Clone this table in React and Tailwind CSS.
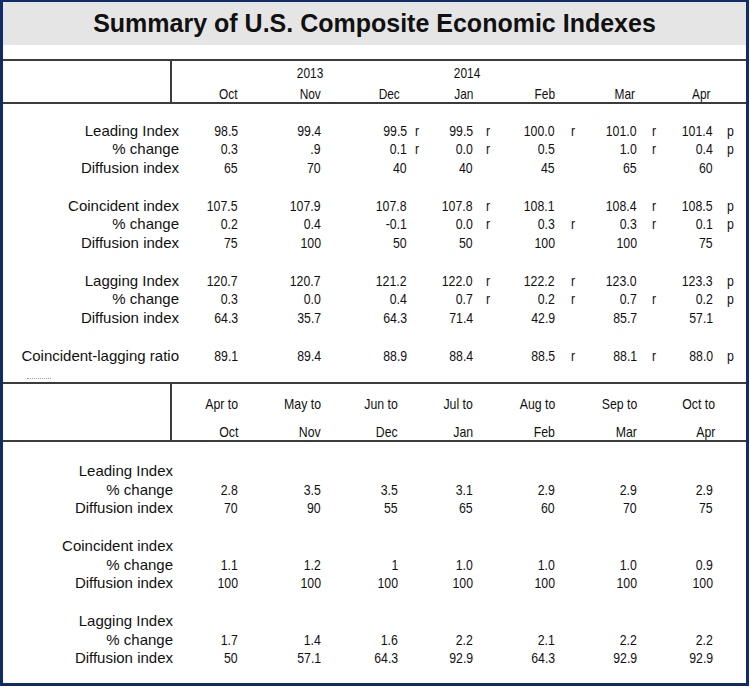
import React from "react";

// value/flag pairs; flag is "r", "p" or ""
const topRows = [
  { label: "Leading Index", cells: [["98.5"], ["99.4"], ["99.5", "r"], ["99.5", "r"], ["100.0", "r"], ["101.0", "r"], ["101.4", "p"]] },
  { label: "% change", cells: [["0.3"], [".9"], ["0.1", "r"], ["0.0", "r"], ["0.5", ""], ["1.0", "r"], ["0.4", "p"]] },
  { label: "Diffusion index", cells: [["65"], ["70"], ["40", ""], ["40", ""], ["45", ""], ["65", ""], ["60", ""]] },
  null,
  { label: "Coincident index", cells: [["107.5"], ["107.9"], ["107.8", ""], ["107.8", "r"], ["108.1", ""], ["108.4", "r"], ["108.5", "p"]] },
  { label: "% change", cells: [["0.2"], ["0.4"], ["-0.1", ""], ["0.0", "r"], ["0.3", "r"], ["0.3", "r"], ["0.1", "p"]] },
  { label: "Diffusion index", cells: [["75"], ["100"], ["50", ""], ["50", ""], ["100", ""], ["100", ""], ["75", ""]] },
  null,
  { label: "Lagging Index", cells: [["120.7"], ["120.7"], ["121.2", ""], ["122.0", "r"], ["122.2", "r"], ["123.0", ""], ["123.3", "p"]] },
  { label: "% change", cells: [["0.3"], ["0.0"], ["0.4", ""], ["0.7", "r"], ["0.2", "r"], ["0.7", "r"], ["0.2", "p"]] },
  { label: "Diffusion index", cells: [["64.3"], ["35.7"], ["64.3", ""], ["71.4", ""], ["42.9", ""], ["85.7", ""], ["57.1", ""]] },
  null,
  { label: "Coincident-lagging ratio", cells: [["89.1"], ["89.4"], ["88.9", ""], ["88.4", ""], ["88.5", "r"], ["88.1", "r"], ["88.0", "p"]] },
];

const bottomRows = [
  { label: "Leading Index", values: ["", "", "", "", "", "", ""] },
  { label: "% change", values: ["2.8", "3.5", "3.5", "3.1", "2.9", "2.9", "2.9"] },
  { label: "Diffusion index", values: ["70", "90", "55", "65", "60", "70", "75"] },
  null,
  { label: "Coincident index", values: ["", "", "", "", "", "", ""] },
  { label: "% change", values: ["1.1", "1.2", "1", "1.0", "1.0", "1.0", "0.9"] },
  { label: "Diffusion index", values: ["100", "100", "100", "100", "100", "100", "100"] },
  null,
  { label: "Lagging Index", values: ["", "", "", "", "", "", ""] },
  { label: "% change", values: ["1.7", "1.4", "1.6", "2.2", "2.1", "2.2", "2.2"] },
  { label: "Diffusion index", values: ["50", "57.1", "64.3", "92.9", "64.3", "92.9", "92.9"] },
];

const flagPad = ["pl-[8px]", "pl-[13px]", "pl-[16px]", "pl-[15px]", "pl-[14px]"];

// Arial Narrow look: squeeze Liberation Sans horizontally
const N = ({ children, left }) => (
  <span className={`inline-block scale-x-[0.82] ${left ? "origin-left" : "origin-right"}`}>{children}</span>
);

const TopRow = ({ row }) => {
  if (!row) return <div className="h-[18.75px]" />;
  return (
    <div className="grid grid-cols-[176px_59px_83px_86px_23px_43px_24px_58px_25px_57px_23px_53px_1fr] h-[18.75px] leading-[18.75px] text-[15px]">
      <div className="text-right">{row.label}</div>
      {row.cells.map(([v, f], i) =>
        i < 2 ? (
          <div key={i} className="text-right"><N>{v}</N></div>
        ) : (
          <React.Fragment key={i}>
            <div className="text-right"><N>{v}</N></div>
            <div className={flagPad[i - 2]}><N left>{f}</N></div>
          </React.Fragment>
        )
      )}
    </div>
  );
};

const BottomRow = ({ row }) => {
  if (!row) return <div className="h-[18.75px]" />;
  return (
    <div className="grid grid-cols-[170px_65px_83px_77px_75px_82px_82px_76px_1fr] h-[18.75px] leading-[18.75px] text-[15px]">
      <div className="text-right">{row.label}</div>
      {row.values.map((v, i) => (
        <div key={i} className="text-right"><N>{v}</N></div>
      ))}
    </div>
  );
};

export default function App() {
  const months = ["Oct", "Nov", "Dec", "Jan", "Feb", "Mar", "Apr"];
  const fromMonths = ["Apr to", "May to", "Jun to", "Jul to", "Aug to", "Sep to", "Oct to"];
  const toMonths = ["Oct", "Nov", "Dec", "Jan", "Feb", "Mar", "Apr"];

  return (
    <div className="bg-white w-[750px] h-[692px] text-[#111] font-['Liberation_Sans',Arial,sans-serif]">
      <div className="w-[749px] border-l-[3px] border-r-[3px] border-t-2 border-b-[3px] border-[#0f2c68] bg-white">
        {/* title */}
        <div className="h-[43px] bg-[#e5e5e5] flex items-center justify-center">
          <h1 className="text-[25px] font-bold">Summary of U.S. Composite Economic Indexes</h1>
        </div>
        <div className="h-[14px]" />

        {/* top header */}
        <div className="border-t-2 border-b-2 border-[#3c3c3c] h-[45px]">
          <div className="grid grid-cols-[169px_66px_83px_86px_23px_43px_24px_58px_25px_57px_23px_53px_1fr] h-full text-[14.5px]">
            <div className="border-r-2 border-[#3c3c3c] row-span-2" />
            <div className="col-span-12 grid grid-cols-subgrid pt-[3px] h-[19px] leading-[19px]">
              <div />
              <div className="text-right -mr-[2px]"><N>2013</N></div>
              <div />
              <div />
              <div className="text-right -mr-[7px]"><N>2014</N></div>
            </div>
            <div className="col-span-12 grid grid-cols-[66px_83px_109px_43px_82px_80px_76px] h-[22px] leading-[22px] pt-[3px]">
              {months.map((m, i) => (
                <div key={m} className={`text-right ${i === 2 ? "pr-[30px]" : ""}`}><N>{m}</N></div>
              ))}
            </div>
          </div>
        </div>

        {/* top data */}
        <div className="pt-[17.6px]">
          {topRows.map((row, i) => (
            <TopRow key={i} row={row} />
          ))}
        </div>
        <div className="h-[17px] flex items-end pb-[3px]">
          <div className="ml-[24px] w-[24px] border-t border-dotted border-[#999]" />
        </div>

        {/* bottom header */}
        <div className="border-t-2 border-b-2 border-[#3c3c3c] h-[60px]">
          <div className="grid grid-cols-[169px_66px_83px_77px_75px_82px_82px_78px_1fr] h-full text-[15px]">
            <div className="border-r-2 border-[#3c3c3c] row-span-2" />
            {fromMonths.map((m) => (
              <div key={m} className="text-right pt-[11px] leading-[18px]"><N>{m}</N></div>
            ))}
            <div />
            {toMonths.map((m, i) => (
              <div key={m + i} className="text-right pt-[10px] leading-[18px]"><N>{m}</N></div>
            ))}
            <div />
          </div>
        </div>

        {/* bottom data */}
        <div className="pt-[19.6px] pb-[15px]">
          {bottomRows.map((row, i) => (
            <BottomRow key={i} row={row} />
          ))}
        </div>
      </div>
    </div>
  );
}
